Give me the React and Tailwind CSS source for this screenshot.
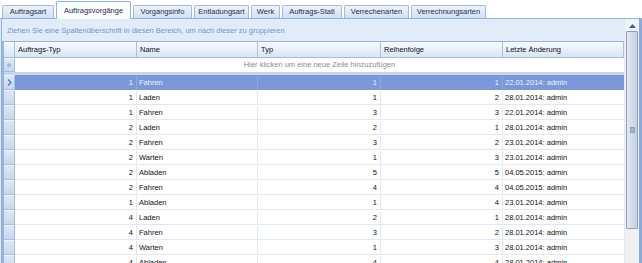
import React from 'react';

const tabs = [
  { label: 'Auftragsart', w: 'w-[52px]' },
  { label: 'Auftragsvorgänge', w: 'w-[75px]', active: true },
  { label: 'Vorgangsinfo', w: 'w-[59px]' },
  { label: 'Entladungsart', w: 'w-[55px]' },
  { label: 'Werk', w: 'w-[29px]' },
  { label: 'Auftrags-Stati', w: 'w-[60px]' },
  { label: 'Verrechenarten', w: 'w-[65px]' },
  { label: 'Verrechnungsarten', w: 'w-[75px]' },
];

const rows = [
  [1, 'Fahren', 1, 1, '22.01.2014: admin'],
  [1, 'Laden', 1, 2, '28.01.2014: admin'],
  [1, 'Fahren', 3, 3, '22.01.2014: admin'],
  [2, 'Laden', 2, 1, '28.01.2014: admin'],
  [2, 'Fahren', 3, 2, '23.01.2014: admin'],
  [2, 'Warten', 1, 3, '23.01.2014: admin'],
  [2, 'Abladen', 5, 5, '04.05.2015: admin'],
  [2, 'Fahren', 4, 4, '04.05.2015: admin'],
  [1, 'Abladen', 1, 4, '23.01.2014: admin'],
  [4, 'Laden', 2, 1, '28.01.2014: admin'],
  [4, 'Fahren', 3, 2, '28.01.2014: admin'],
  [4, 'Warten', 1, 3, '28.01.2014: admin'],
  [4, 'Abladen', 4, 4, '28.01.2014: admin'],
];

const headers = [
  { label: 'Auftrags-Typ', w: 'w-[122px]' },
  { label: 'Name', w: 'w-[121px]' },
  { label: 'Typ', w: 'w-[123px]' },
  { label: 'Reihenfolge', w: 'w-[122px]' },
  { label: 'Letzte Änderung', w: 'w-[121px]' },
];

function Indicator({ children }) {
  return (
    <div className="w-[11px] shrink-0 h-full flex items-center justify-center bg-gradient-to-b from-[#dce7f6] to-[#c6d7ee] border-r border-b border-[#a4bee3] border-t border-t-[#eef3fb]">
      {children}
    </div>
  );
}

export default function App() {
  return (
    <div
      className="w-[642px] h-[263px] bg-white overflow-hidden text-[7.5px] text-[#111] flex flex-col"
      style={{ fontFamily: '"Liberation Sans", Arial, sans-serif' }}
    >
      {/* tabs */}
      <div className="h-[18px] shrink-0 flex items-end pl-[2px] gap-[2px] bg-white">
        {tabs.map((t) =>
          t.active ? (
            <div
              key={t.label}
              className={`${t.w} h-[18px] flex items-center justify-center bg-[#fbfcfe] border border-b-0 border-[#8db2e3] rounded-t-[2px] text-[#1b2f50] -mb-[1px] relative z-10`}
            >
              {t.label}
            </div>
          ) : (
            <div
              key={t.label}
              className={`${t.w} h-[13px] flex items-center justify-center bg-gradient-to-b from-[#eef3fb] to-[#d3e0f2] border border-b-0 border-[#9fbbe2] rounded-t-[2px] text-[#1b2f50]`}
            >
              {t.label}
            </div>
          )
        )}
      </div>

      {/* panel */}
      <div className="flex-1 flex border-t border-[#8db2e3] bg-[#dfe8f6]">
        <div className="w-[1px] ml-[1px] bg-[#8db2e3]" />
        <div className="w-[622px] flex flex-col">
          <div className="h-[22px] shrink-0 flex items-center pl-[5px] pt-[2px] text-[#6f97cf] bg-[#e2ebf8]">
            Ziehen Sie eine Spaltenüberschrift in diesen Bereich, um nach dieser zu gruppieren
          </div>
          <div className="flex-1 bg-white border-l-[2px] border-t border-[#98b4dd]">
            {/* header */}
            <div className="h-[16px] flex bg-gradient-to-b from-[#f7fafe] to-[#d9e5f5] border-b border-[#a3bde2]">
              <div className="w-[11px] shrink-0 border-r border-[#a9c2e4]" />
              {headers.map((h) => (
                <div
                  key={h.label}
                  className={`${h.w} shrink-0 border-r border-[#a9c2e4] pl-[3px] flex items-center`}
                >
                  {h.label}
                </div>
              ))}
            </div>
            {/* new row */}
            <div className="h-[17px] flex border-b-[3px] border-[#c8d6ea]">
              <Indicator>
                <div className="w-[4px] h-[4px] rounded-full bg-[#9fb8df]" />
              </Indicator>
              <div className="flex-1 flex items-center justify-center text-[#8c8c8c]">
                Hier klicken um eine neue Zeile hinzuzufügen
              </div>
            </div>
            {/* data */}
            {rows.map((r, i) => {
              const sel = i === 0;
              const line = sel ? 'border-[#8ea8e2]' : 'border-[#dfe8f5]';
              return (
                <div key={i} className="h-[15px] flex">
                  <Indicator>
                    {sel && (
                      <svg width="5" height="7" viewBox="0 0 5 7">
                        <path d="M1 0.5 L4 3.5 L1 6.5" fill="none" stroke="#4a78c8" strokeWidth="1.2" />
                      </svg>
                    )}
                  </Indicator>
                  <div
                    className={`flex flex-1 border-b pt-[1px] ${
                      sel ? 'bg-[#7b98db] text-[#eef2fc] border-[#7b98db]' : 'border-[#dfe8f5]'
                    }`}
                  >
                    <div className={`w-[122px] shrink-0 pr-[3px] flex items-center justify-end border-r ${line}`}>
                      {r[0]}
                    </div>
                    <div className={`w-[121px] shrink-0 pl-[2px] flex items-center border-r ${line}`}>
                      {r[1]}
                    </div>
                    <div className={`w-[123px] shrink-0 pr-[3px] flex items-center justify-end border-r ${line}`}>
                      {r[2]}
                    </div>
                    <div className={`w-[122px] shrink-0 pr-[3px] flex items-center justify-end border-r ${line}`}>
                      {r[3]}
                    </div>
                    <div className="w-[121px] shrink-0 pl-[2px] flex items-center">{r[4]}</div>
                  </div>
                </div>
              );
            })}
          </div>
        </div>
        {/* scrollbar */}
        <div className="w-[14px] ml-[1px] flex flex-col pt-[1px] bg-[#f0f0f0]">
          <div className="h-[11px] shrink-0 flex items-center justify-center bg-[#eef3fa]">
            <svg width="7" height="4" viewBox="0 0 7 4">
              <path d="M0 4 L3.5 0 L7 4 Z" fill="#4d5f80" />
            </svg>
          </div>
          <div className="h-[198px] shrink-0 mx-[1px] rounded-[1px] border border-[#8aa1c6] bg-gradient-to-r from-[#e4e9f1] via-[#d3dbe7] to-[#c6d0de] flex items-center justify-center">
            <div className="w-[5px] h-[6px] bg-[#a3b3cb] border border-[#8d9fba]" />
          </div>
          <div className="flex-1 bg-[#f0f0f0]" />
        </div>
        <div className="w-[3px] bg-[#8aa9dc]" />
      </div>
    </div>
  );
}
